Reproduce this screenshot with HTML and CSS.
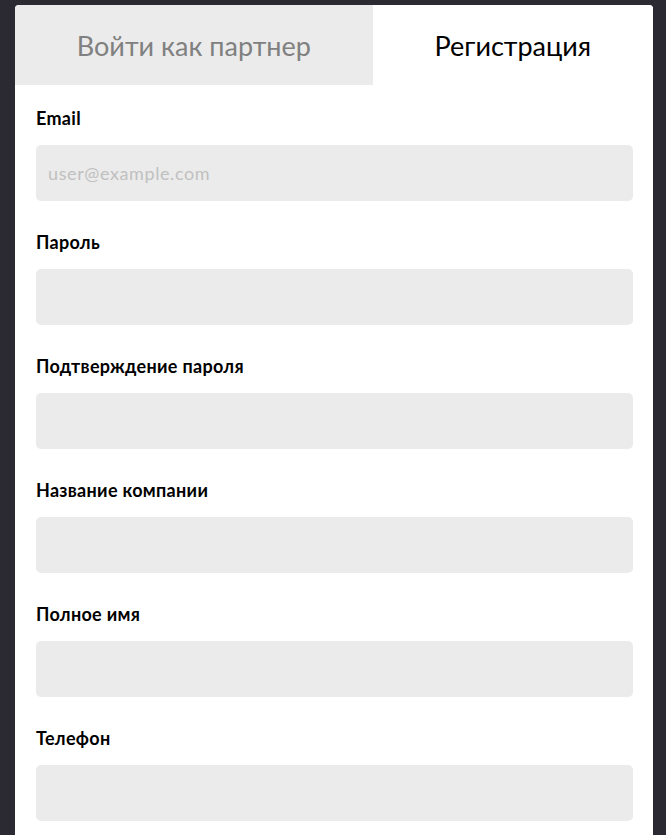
FILE: index.html
```html
<!DOCTYPE html>
<html lang="ru">
<head>
    <meta charset="UTF-8">
    <meta name="viewport" content="width=device-width, initial-scale=1.0">
    <title>Партнеры - Регистрация</title>
    <link rel="stylesheet" href="styles.css">
</head>
<body>
    <div class="card">
        <!-- Tabs -->
        <div class="tabs">
            <div class="tab">Войти как партнер</div>
            <div class="tab active">Регистрация</div>
        </div>

        <!-- Registration form -->
        <form class="form" id="registerForm">
            <div class="field">
                <label for="email">Email</label>
                <input type="email" id="email" placeholder="user@example.com">
            </div>
            <div class="field">
                <label for="password">Пароль</label>
                <input type="password" id="password">
            </div>
            <div class="field">
                <label for="password2">Подтверждение пароля</label>
                <input type="password" id="password2">
            </div>
            <div class="field">
                <label for="company">Название компании</label>
                <input type="text" id="company">
            </div>
            <div class="field">
                <label for="fullname">Полное имя</label>
                <input type="text" id="fullname">
            </div>
            <div class="field">
                <label for="phone">Телефон</label>
                <input type="tel" id="phone">
            </div>
        </form>
    </div>
</body>
</html>
```

FILE: styles.css
```css
body {
    font-family: Lato, "Open Sans", sans-serif;
    margin: 0;
    padding: 5px 13px 0 15px;
    background-color: #2b2a33;
}
.card {
    background: white;
    border-radius: 4px 4px 0 0;
    overflow: hidden;
}
.tabs {
    display: flex;
    height: 80px;
}
.tab {
    flex: 1 1 auto;
    display: flex;
    align-items: center;
    justify-content: center;
    font-size: 27px;
    color: #808080;
    background-color: #ebebeb;
}
.tab.active {
    background-color: white;
    color: black;
}
.form {
    padding: 21px 20px 10px 21px;
}
.field {
    margin-bottom: 29px;
}
.field label {
    display: block;
    font-size: 18px;
    font-weight: bold;
    letter-spacing: 0.3px;
    color: black;
    line-height: 24px;
    margin-bottom: 15px;
}
.field input {
    display: block;
    box-sizing: border-box;
    width: 100%;
    height: 56px;
    padding: 0 12px;
    border: none;
    border-radius: 5px;
    background-color: #ebebeb;
    font-family: inherit;
    font-size: 18px;
    letter-spacing: 0.6px;
    outline: none;
}
.field input::placeholder {
    color: #c0c0c0;
}
```
